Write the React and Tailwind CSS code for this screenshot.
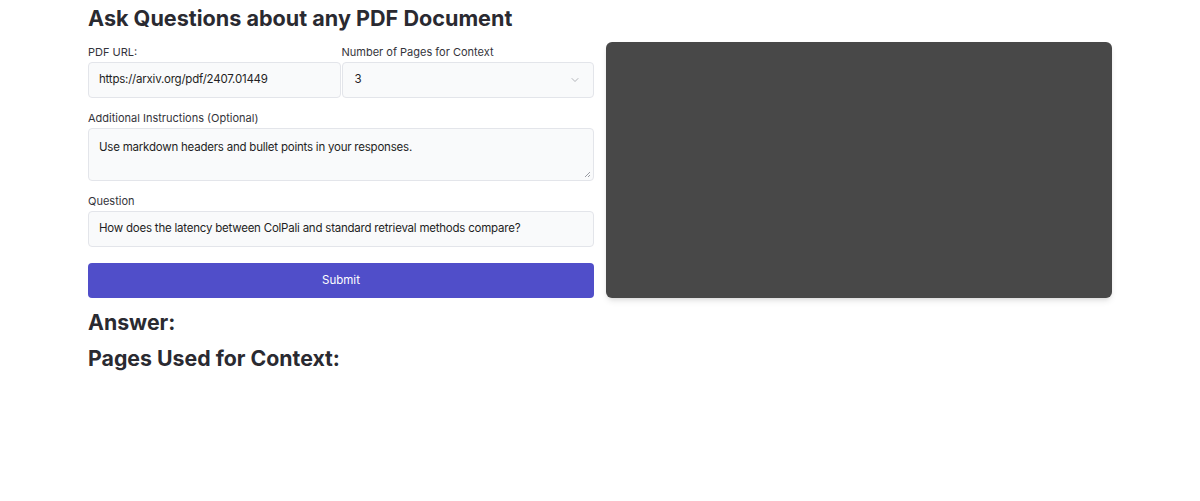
import { ChevronDown } from 'lucide-react';

const font = { fontFamily: 'Inter, "Noto Sans", sans-serif' };

const Label = ({ children, className = '' }) => (
    <label className={`block text-[11px] leading-5 text-[#34343b] ${className}`}>{children}</label>
);

const fieldText = 'text-[11.5px] tracking-[-0.22px] text-[#1f1f24]';

const App = () => {
    return (
        <div className="min-h-screen bg-white text-[#2a2a31]" style={font}>
            <div className="mx-auto max-w-5xl">
                <h1 className="pt-1 text-[21.6px] leading-7 font-bold text-[#2a2a31]">
                    Ask Questions about any PDF Document
                </h1>
                <div className="mt-2.5 grid grid-cols-2 gap-3">
                    {/* Form */}
                    <div className="flex flex-col">
                        <div className="grid grid-cols-2 gap-px">
                            <div>
                                <Label>PDF URL:</Label>
                                <div className={`h-9 px-2.5 flex items-center rounded border border-[#e3e5ea] bg-[#f9fafb] ${fieldText}`}>
                                    https://arxiv.org/pdf/2407.01449
                                </div>
                            </div>
                            <div>
                                <Label>Number of Pages for Context</Label>
                                <div className={`h-9 px-3 flex items-center justify-between rounded border border-[#e3e5ea] bg-[#f9fafb] ${fieldText}`}>
                                    <span>3</span>
                                    <ChevronDown className="w-3 h-3 text-[#9a9ca3]" strokeWidth={1.5} />
                                </div>
                            </div>
                        </div>

                        <Label className="mt-2.5">Additional Instructions (Optional)</Label>
                        <div className={`relative h-[53px] px-2.5 pt-2 rounded border border-[#e3e5ea] bg-[#f9fafb] leading-5 ${fieldText}`}>
                            Use markdown headers and bullet points in your responses.
                            <svg className="absolute right-0.5 bottom-0.5" width="7" height="7" viewBox="0 0 7 7">
                                <path d="M6 1 L1 6 M6 4 L4 6" stroke="#9a9ca3" strokeWidth="1" />
                            </svg>
                        </div>

                        <Label className="mt-2.5">Question</Label>
                        <div className={`h-9 px-2.5 flex items-center rounded border border-[#e3e5ea] bg-[#f9fafb] ${fieldText}`}>
                            How does the latency between ColPali and standard retrieval methods compare?
                        </div>

                        <button className="mt-4 h-[35px] w-full rounded bg-[#504ec9] text-[11.5px] text-white">
                            Submit
                        </button>
                    </div>

                    {/* Viewer */}
                    <div className="rounded-md bg-[#484848] shadow-md" />
                </div>

                <h2 className="mt-2 text-[21.3px] leading-8 font-bold text-[#2a2a31]">Answer:</h2>
                <h2 className="mt-1 text-[21.3px] leading-8 font-bold text-[#2a2a31]">Pages Used for Context:</h2>
            </div>
        </div>
    );
};

export default App;
